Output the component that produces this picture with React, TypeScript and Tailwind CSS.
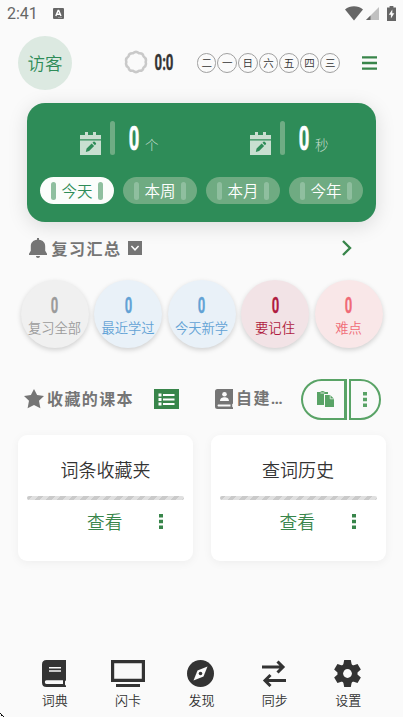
import type { ReactNode } from 'react';
import clsx from 'clsx';

const weekdays = ['二', '一', '日', '六', '五', '四', '三'];
const periods = ['今天', '本周', '本月', '今年'];

const reviews = [
  { label: '复习全部', className: 'bg-[#f0f0f0] text-[#9b9b9b]' },
  { label: '最近学过', className: 'bg-[#e9f1f8] text-[#62a2d5]' },
  { label: '今天新学', className: 'bg-[#e9f1f8] text-[#62a2d5]' },
  { label: '要记住', className: 'bg-[#f2e3e6] text-[#b01c40]' },
  { label: '难点', className: 'bg-[#f9e7e8] text-[#f06a76]' },
];

// Tall condensed digits
function Digits({ children, className }: { children: ReactNode; className?: string }) {
  return (
    <span className={clsx('inline-flex justify-center font-[Roboto,sans-serif] font-bold leading-none', className)}>
      {children}
    </span>
  );
}

function Dots() {
  return (
    <svg className="w-1 h-[15px]" viewBox="0 0 4 15" fill="currentColor">
      <path d="M0 0h4v3.4H0zM0 5.8h4v3.4H0zM0 11.6h4V15H0z" />
    </svg>
  );
}

function StatusBar() {
  return (
    <div className="h-7 shrink-0 flex items-center pl-[7px] pr-[7px] text-[#666]">
      <span className="w-[46px] text-[16px] font-normal font-[Roboto,sans-serif]">2:41</span>
      <svg className="w-[11px] h-[11px] -mt-px" viewBox="0 0 11 11">
        <rect width="11" height="11" rx="1" fill="#666" />
        <path d="M2.8 8 5.1 2.5h.6L8 8M3.7 6.2h3.4" fill="none" stroke="#fff" strokeWidth="1.4" />
        <path d="M5.5 9.5h1M7.5 9.5h1" stroke="#ddd" strokeWidth="0.8" />
      </svg>
      <div className="ml-auto flex items-center -mt-[2px]">
        <svg className="w-[18px] h-[15px]" viewBox="0 0 18 15">
          <path d="M0 3.4C5-.9 13-.9 18 3.4L9 14.5z" fill="#666" />
        </svg>
        <svg className="ml-[3px] w-[13px] h-[14px]" viewBox="0 0 13 14">
          <path d="M0 14 13 1v13z" fill="#c1c1c1" />
          <path d="M0 14 4.5 9.5V14z" fill="#666" />
        </svg>
        <svg className="ml-2 w-[9px] h-[15px]" viewBox="0 0 9 15">
          <path d="M2.6 0h3.8v1.5H9V15H0V1.5h2.6z" fill="#666" />
          <path d="M5.3 3.5 1.8 8.8h2.1v3.8l3.4-5.4H5.3z" fill="#fafafa" />
        </svg>
      </div>
    </div>
  );
}

function Header() {
  return (
    <div className="mt-2 h-[54px] shrink-0 flex items-center pl-[18px] pr-[26px]">
      <div className="size-[54px] rounded-full bg-[#dce9e1] text-[#2e8c58] text-[17.5px] flex items-center justify-center">访客</div>
      <svg className="ml-[52px] w-6 h-6 -mt-[2px]" viewBox="0 0 24 24" fill="none" stroke="#c9c9c9" strokeWidth="2.5" strokeLinejoin="round">
        <path d="M9 3.2Q12 .5 15 3.2Q19 2.8 19.4 6.2Q23 8.6 21.6 12Q23 15.4 19.4 17.8Q19 21.2 15 20.8Q12 23.5 9 20.8Q5 21.2 4.6 17.8Q1 15.4 2.4 12Q1 8.6 4.6 6.2Q5 2.8 9 3.2z" />
      </svg>
      <Digits className="ml-[5px] w-[22px] text-[22px] text-[#333] scale-x-[0.6] [-webkit-text-stroke:0.4px_currentColor]">0:0</Digits>
      <div className="ml-auto flex gap-[1px]">
        {weekdays.map((d) => (
          <div key={d} className="size-[19.6px] rounded-full border border-[#a0a0a0] text-[10.5px] text-[#333] flex items-center justify-center">{d}</div>
        ))}
      </div>
      <svg className="ml-[21.5px] w-[15.5px] h-[14px]" viewBox="0 0 15.5 14" stroke="#38854a" strokeWidth="2.3">
        <path d="M0 1.3h15.5M0 7h15.5M0 12.6h15.5" />
      </svg>
    </div>
  );
}

function Stat({ unit }: { unit: string }) {
  return (
    <div className="flex items-end h-[34px]">
      <svg className="w-[21px] h-[23px]" viewBox="0 0 21 23">
        <path d="M0 3h5V0h3v3h5V0h3v3h5v4.2H0zM0 8.5h21V23H0z" fill="#c8dfd0" />
        <path d="m5.8 20 .8-3.4 5.1-5.1 2.4 2.4-5 5zM12.5 10.8l1-1q.7-.5 1.4.2l1 1q.5.7 0 1.3l-1 1z" fill="#2e8c58" />
      </svg>
      <div className="ml-[9px] w-[5px] h-[34px] rounded-full bg-[#6fac84]" />
      <Digits className="ml-[9px] w-5 text-[34px] text-white self-center scale-x-[0.54] [-webkit-text-stroke:0.7px_currentColor]">0</Digits>
      <span className="ml-[1px] mb-[2px] w-[14px] text-[13.5px] leading-[18px] font-light text-[#c8dfd0]">{unit}</span>
    </div>
  );
}

function SummaryCard() {
  return (
    <div className="mt-[13px] mx-[27px] w-[349px] h-[119px] shrink-0 rounded-[18px] bg-[#2e8c58] shadow-[0_4px_20px_rgba(0,0,0,0.13)] pt-[18px] px-[13px]">
      <div className="flex pl-10 gap-[91px]">
        <Stat unit="个" />
        <Stat unit="秒" />
      </div>
      <div className="mt-[22px] flex gap-[9px]">
        {periods.map((p, i) => (
          <div
            key={p}
            className={clsx(
              'w-[74px] h-[27px] rounded-full flex items-center justify-between px-[11px] text-[15.5px]',
              i === 0 ? 'bg-[#fbfdfb] text-[#2e8c58]' : 'bg-[#6fab82] text-white',
            )}
          >
            <span className="w-[4.5px] h-[18px] rounded-full bg-[#8fbf9f]" />
            {p}
            <span className="w-[4.5px] h-[18px] rounded-full bg-[#8fbf9f]" />
          </div>
        ))}
      </div>
    </div>
  );
}

function ReviewSection() {
  return (
    <>
      <div className="mt-[13px] h-[26px] shrink-0 flex items-center pl-[29px] pr-[51px] text-[#757575]">
        <svg className="w-[18px] h-5" viewBox="0 0 18 20" fill="currentColor">
          <path d="M8 0h2v1.8c4 .5 6.2 3 6.2 6.6v4.3l1.8 3V17H0v-1.3l1.8-3V8.4C1.8 4.8 4 2.3 8 1.8zM7 18h4c0 1.2-.8 2-2 2s-2-.8-2-2z" />
        </svg>
        <span className="ml-[4.5px] -mt-px text-[16px] font-bold tracking-[1.5px]">复习汇总</span>
        <svg className="ml-[6px] w-[14px] h-[14px]" viewBox="0 0 14 14">
          <path d="M0 0h14v14H0z" fill="currentColor" />
          <path d="m3.4 5 3.6 3.8L10.6 5" fill="none" stroke="#fff" strokeWidth="1.5" />
        </svg>
        <svg className="ml-auto w-[10px] h-4" viewBox="0 0 10 16" fill="none" stroke="#38854a" strokeWidth="2.4">
          <path d="m1 1 7 7-7 7" />
        </svg>
      </div>
      <div className="mt-[19px] shrink-0 flex gap-[5.5px] pl-[20.5px]">
        {reviews.map((r) => (
          <div key={r.label} className={clsx('size-[68px] shrink-0 rounded-full shadow-[0_2px_5px_rgba(0,0,0,0.17)] flex flex-col items-center pt-[13px]', r.className)}>
            <Digits className="mt-[1px] text-[22.5px] scale-x-[0.58] [-webkit-text-stroke:0.3px_currentColor]">0</Digits>
            <span className="mt-[1.5px] text-[13.3px] leading-5 whitespace-nowrap">{r.label}</span>
          </div>
        ))}
      </div>
    </>
  );
}

function LibraryHeader() {
  return (
    <div className="mt-[31px] h-[41px] shrink-0 flex items-center pl-6 pr-[22px] text-[#757575]">
      <svg className="w-5 h-5 -mt-px" viewBox="0 0 20 20" fill="currentColor">
        <path d="m10 0 3.1 6.1 6.9.9-5 4.7 1.4 7.6-6.4-3.4-6.4 3.4L5 11.7 0 7l6.9-.9z" />
      </svg>
      <span className="ml-[3px] -mt-[3px] w-[107px] text-[16px] font-bold tracking-[1.4px]">收藏的课本</span>
      <svg className="w-[25px] h-5 -mt-px" viewBox="0 0 25 20">
        <path d="M0 0h25v20H0z" fill="#38854a" />
        <path d="M4.5 4.5h3v3h-3zM9 5h11.5v2H9zM4.5 9h3v3h-3zM9 9.5h11.5v2H9zM4.5 13.5h3v3h-3zM9 14h11.5v2H9z" fill="#fff" />
      </svg>
      <svg className="ml-9 w-[18px] h-5 -mt-px" viewBox="0 0 18 20">
        <path d="M2.5 0H18v14.5l-.8.8v2.4l.8.8V20H2.5Q0 20 0 17.5v-15Q0 0 2.5 0z" fill="currentColor" />
        <circle cx="9.5" cy="5.2" r="2.3" fill="#fafafa" />
        <path d="M5 12c.3-3 2.1-3.7 4.5-3.7S13.7 9 14 12zM3 15.5h12.5v2H3q-1-1 0-2z" fill="#fafafa" />
      </svg>
      <span className="ml-[3px] -mt-[3px] text-[16px] font-bold tracking-[1.4px]">自建<span className="font-[Roboto,sans-serif] tracking-[-0.9px]">...</span></span>
      <div className="ml-auto flex gap-[2px] text-[#59a366]">
        <div className="w-[46px] h-[41px] border-2 border-r-[3px] border-[#59a366] rounded-l-full flex items-center justify-center">
          <svg className="w-[17px] h-4 ml-[3px] -mt-px" viewBox="0 0 17 16" fill="currentColor">
            <path d="M0 1h3.2Q5.5-1 8 1h3v2H7v11H0z" />
            <path d="M8 4h5.2L17 7.8V16H8z" />
            <path d="M13.2 4v3.8H17" fill="none" stroke="#fafafa" strokeWidth=".7" />
            <path d="M3.5 2h4" stroke="#fafafa" strokeWidth=".8" />
          </svg>
        </div>
        <div className="w-8 h-[41px] border-2 border-[#59a366] rounded-r-full flex items-center justify-center">
          <Dots />
        </div>
      </div>
    </div>
  );
}

function BookCard({ title }: { title: string }) {
  return (
    <div className="w-[175px] h-[126px] rounded-[9px] bg-white shadow-[0_2px_10px_rgba(0,0,0,0.05)] px-[9px] pt-[20px]">
      <div className="h-7 text-center text-[18px] leading-7 text-[#333]">{title}</div>
      <div className="mt-[13px] h-1 rounded-full bg-[repeating-linear-gradient(135deg,#cacaca_0_4px,#e0e0e0_4px_8px)]" />
      <div className="mt-[7px] h-7 flex items-center text-[#38854a]">
        <span className="ml-[60px] w-[72px] text-[17.7px]">查看</span>
        <Dots />
      </div>
    </div>
  );
}

function NavItem({ label, children }: { label: string; children: ReactNode }) {
  return (
    <div className="w-[73.4px] flex flex-col items-center">
      <div className="h-7 flex items-center">{children}</div>
      <span className="mt-[3px] text-[13px] leading-5">{label}</span>
    </div>
  );
}

function BottomNav() {
  return (
    <div className="mt-auto h-[58px] shrink-0 flex pl-[18px] text-[#333]">
      <NavItem label="词典">
        <svg className="w-6 h-[27px] mr-[2px]" viewBox="0 0 24 27">
          <path d="M4.5 0H24v20.2l-1 1v3.6l1 1V27H4.5Q0 27 0 22.5v-18Q0 0 4.5 0z" fill="currentColor" />
          <path d="M7 7h12v1.5H7zM7 10.3h12v1.5H7zM4.5 20.2H21V24H4.5Q2.8 24 2.8 22.1t1.7-1.9z" fill="#fafafa" />
        </svg>
      </NavItem>
      <NavItem label="闪卡">
        <svg className="w-[34px] h-[27px]" viewBox="0 0 34 27" fill="currentColor">
          <path fillRule="evenodd" d="M0 0h34v22H0zM3.2 3.2v15.5h27.6V3.2z" />
          <path d="M5 24h24v3H5z" />
        </svg>
      </NavItem>
      <NavItem label="发现">
        <svg className="w-[27px] h-[27px] mr-px" viewBox="0 0 27 27">
          <circle cx="13.5" cy="13.5" r="13.5" fill="currentColor" />
          <path d="m20.5 6.5-4 10-10 4 4-10z" fill="#fafafa" />
          <circle cx="13.5" cy="13.5" r="1.8" fill="currentColor" />
        </svg>
      </NavItem>
      <NavItem label="同步">
        <svg className="w-6 h-[27px] mr-px" viewBox="0 0 24 27" fill="none" stroke="currentColor" strokeWidth="3">
          <path d="M0 7h21M15.5 1.5 21 7l-5.5 5.5M24 20.5H3M8.5 15 3 20.5 8.5 26" />
        </svg>
      </NavItem>
      <NavItem label="设置">
        <svg className="w-[27px] h-[27px] mr-[2px]" viewBox="0 0 27 27">
          <g fill="currentColor">
            <circle cx="13.5" cy="13.5" r="10" />
            <path d="M10.2 0h6.6l1.1 5.5h-8.8zM10.2 27h6.6l1.1-5.5h-8.8z" />
            <path d="M10.2 0h6.6l1.1 5.5h-8.8zM10.2 27h6.6l1.1-5.5h-8.8z" transform="rotate(60 13.5 13.5)" />
            <path d="M10.2 0h6.6l1.1 5.5h-8.8zM10.2 27h6.6l1.1-5.5h-8.8z" transform="rotate(120 13.5 13.5)" />
          </g>
          <circle cx="13.5" cy="13.5" r="4.4" fill="#fafafa" />
        </svg>
      </NavItem>
    </div>
  );
}

export default function App() {
  return (
    <div className="relative w-[403px] h-[717px] overflow-hidden flex flex-col bg-[#fafafa] font-['Noto_Sans_CJK_SC',sans-serif] font-[350]">
      <StatusBar />
      <Header />
      <SummaryCard />
      <ReviewSection />
      <LibraryHeader />
      <div className="mt-[15px] shrink-0 flex gap-[17.5px] pl-[18px]">
        <BookCard title="词条收藏夹" />
        <BookCard title="查词历史" />
      </div>
      <BottomNav />
      <svg className="absolute left-0 bottom-0 w-1 h-1" viewBox="0 0 4 4">
        <path d="M0 0h1v1h1v1h1v1h1v1H3V3H1V1H0z" fill="#111" />
      </svg>
    </div>
  );
}
